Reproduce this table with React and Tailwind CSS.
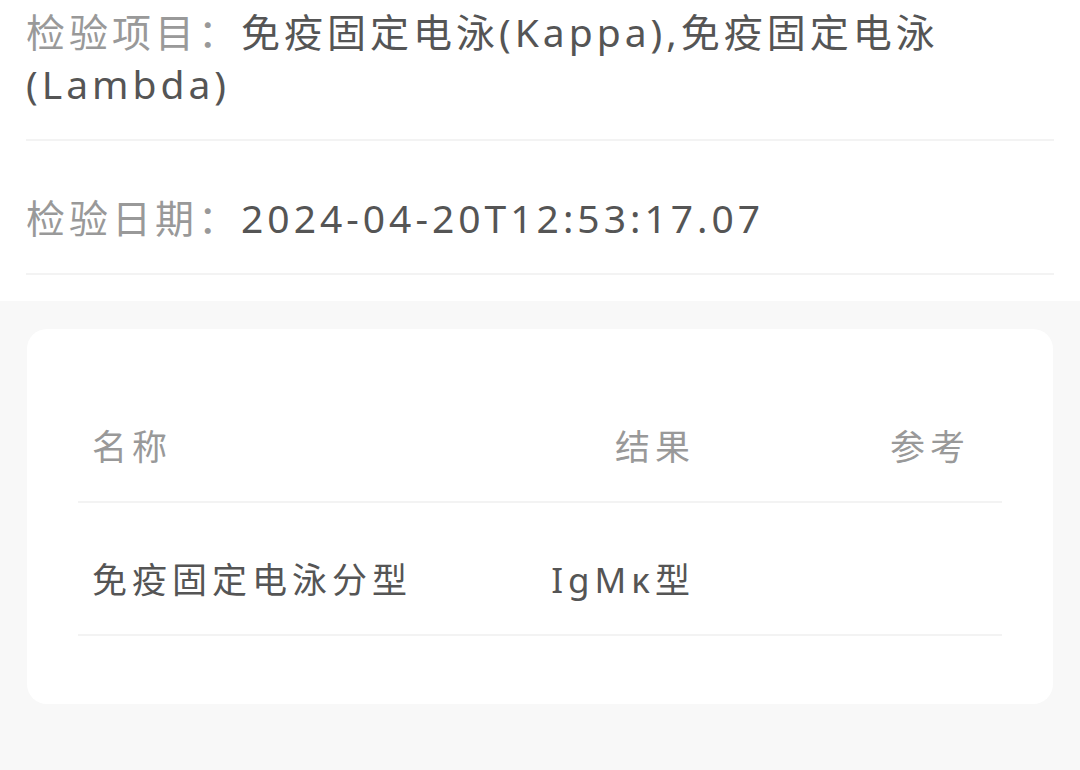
const font = { fontFamily: '"Noto Sans", "Noto Sans CJK SC", sans-serif' };

const InfoRow = ({ label, value, first }) => (
  <div
    className={`border-b-2 border-[#f3f3f3] text-[39px] leading-[52px] tracking-[4px] ${first ? 'pt-[6px] pb-[29px]' : 'pt-[51px] pb-[29px]'}`}
  >
    <span className="text-[#999999]">{label}</span>
    <span className="text-[#555555]">{value}</span>
  </div>
);

const rows = [{ name: '免疫固定电泳分型', result: 'IgMκ型', ref: '' }];

export default function App() {
  return (
    <div className="min-h-[770px] w-[1080px] bg-[#f8f8f8]" style={font}>
      <div className="bg-white px-[26px] pb-[26px]">
        <InfoRow first label="检验项目：" value="免疫固定电泳(Kappa),免疫固定电泳(Lambda)" />
        <InfoRow label="检验日期：" value="2024-04-20T12:53:17.07" />
      </div>

      <div className="mx-[27px] mt-[28px] rounded-[20px] bg-white px-[51px] pt-[40px] pb-[68px]">
        <div className="grid grid-cols-[442px_185px_1fr] border-b-2 border-[#f3f3f3] pt-[52px] pb-[28px] text-[35px] leading-[52px] tracking-[5px] text-[#999999]">
          <div className="pl-[14px]">名称</div>
          <div className="pr-[10px] text-right">结果</div>
          <div className="pr-[32px] text-right">参考</div>
        </div>
        {rows.map((r) => (
          <div
            key={r.name}
            className="grid grid-cols-[442px_185px_1fr] border-b-2 border-[#f3f3f3] pt-[51px] pb-[28px] text-[35px] leading-[52px] tracking-[5px] text-[#555555]"
          >
            <div className="pl-[14px]">{r.name}</div>
            <div className="pr-[10px] text-right">{r.result}</div>
            <div className="pr-[32px] text-right">{r.ref}</div>
          </div>
        ))}
      </div>
    </div>
  );
}
